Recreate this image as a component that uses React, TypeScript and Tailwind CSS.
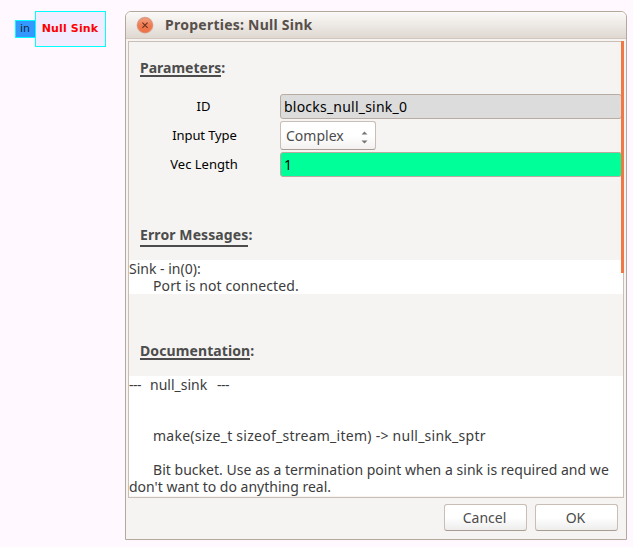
import type { ReactNode } from "react";

function Heading({ title, tracking, rule }: { title: string; tracking: string; rule: string }) {
  return (
    <h2 className={`flex h-[19px] pl-[11px] text-[14px] leading-[18px] font-bold text-[#4c4c4c] ${tracking}`}>
      <span className={`border-b-2 border-[#4c4c4c] ${rule}`}>{title}</span>:
    </h2>
  );
}

function Label({ children, tracking }: { children: ReactNode; tracking: string }) {
  return <div className={`w-[151px] text-center text-[13px] text-black ${tracking}`}>{children}</div>;
}

function Button({ children }: { children: ReactNode }) {
  return (
    <button className="h-[27px] w-[83px] rounded-[3px] border border-[#c9beb5] border-b-[#a99d93] bg-linear-to-b from-white from-50% to-[#eeedec] pr-[2px] text-[14px] leading-[25px] text-[#4c4c4c]">
      {children}
    </button>
  );
}

export default function App() {
  return (
    <div className="flex h-[547px] w-[633px] items-start overflow-hidden bg-[#fff8ff] pt-[11px] font-['Noto_Sans',sans-serif]">
      <div className="ml-[15px] flex w-[110px] shrink-0 items-start font-['DejaVu_Sans',sans-serif]">
        <div className="mt-[9px] h-[18px] w-[20px] border border-r-0 border-[#00ffff] bg-[#3399ff] pr-px text-center text-[11px] leading-[15px] text-[#14263a]">
          in
        </div>
        <div className="h-[36px] w-[71px] border border-[#00ffff] bg-[#f1ecff] pr-px text-center text-[11px] leading-[33px] font-bold tracking-[0.13px] whitespace-nowrap text-[#ff0000]">
          Null Sink
        </div>
      </div>

      <div className="flex h-[529px] w-[502px] shrink-0 flex-col rounded-t-[6px] border border-[#b4a89e] bg-[#f5f4f2]">
        <div className="flex h-[27px] shrink-0 items-center rounded-t-[5px] border-b border-[#d3c7bd] bg-linear-to-b from-[#fbfaf8] to-[#dfd8d1] pl-[10px]">
          <svg width="18" height="18" viewBox="0 0 18 18">
            <defs>
              <linearGradient id="close" x1="0" y1="0" x2="0" y2="1">
                <stop offset="0" stopColor="#f3a184" />
                <stop offset="0.5" stopColor="#f07b50" />
                <stop offset="1" stopColor="#ee7043" />
              </linearGradient>
            </defs>
            <circle cx="9" cy="9.2" r="8.5" fill="#d9c4b9" />
            <circle cx="9" cy="9.2" r="7.5" fill="url(#close)" stroke="#df8465" strokeWidth="0.8" />
            <path d="M6.4 6.6 11.6 11.8M11.6 6.6 6.4 11.8" stroke="#663322" strokeWidth="1.1" />
          </svg>
          <span className="ml-[11px] -mt-px text-[14px] font-bold tracking-[0.25px] text-[#57504a]">Properties: Null Sink</span>
        </div>

        <div className="relative mt-[2px] ml-[2px] h-[457px] w-[496px] shrink-0 border border-[#cbbfb5] pt-[17px]">
          <Heading title="Parameters" tracking="tracking-[0px]" rule="h-[18px]" />
          <div className="mt-[16px] flex flex-col text-[14px] text-black">
            <div className="flex h-[29px] items-start leading-[25px]">
              <Label tracking="tracking-[0px] pr-[2px]">ID</Label>
              <div className="h-[25px] w-[342px] rounded-[3px] border border-[#b8aca2] bg-[#dcdcdc] pl-[3px] leading-[23px] tracking-[0.22px]">
                blocks_null_sink_0
              </div>
            </div>
            <div className="flex h-[29px] items-start leading-[25px]">
              <Label tracking="tracking-[-0.1px]">Input Type</Label>
              <div className="-mt-[2px] flex h-[29px] w-[96px] items-center justify-between rounded-[3px] border border-[#c9beb5] border-b-[#a99d93] bg-linear-to-b from-white from-50% to-[#f3f1f0] pr-[7px] pl-[5px] text-[#4c4c4c]">
                Complex
                <svg className="mt-[3px]" width="7" height="13" viewBox="0 0 7 13" fill="#777573">
                  <path d="M0.5 3.5 3.5 0.5 6.5 3.5ZM0.5 9.5 3.5 12.5 6.5 9.5Z" />
                </svg>
              </div>
            </div>
            <div className="flex items-start leading-[25px]">
              <Label tracking="tracking-[0px] pr-px">Vec Length</Label>
              <div className="h-[25px] w-[342px] rounded-[3px] border border-[#b8aca2] bg-[#00ff99] pl-[3px] leading-[23px]">1</div>
            </div>
          </div>

          <div className="mt-[49px]">
            <Heading title="Error Messages" tracking="tracking-[0.1px]" rule="h-[21px]" />
          </div>
          <div className="mt-[15px] h-[34px] bg-white text-[14px] leading-[17px] whitespace-pre text-[#3c3c3c]">
            <p>Sink - in(0):</p>
            <p className="pl-[24px] tracking-[0.1px]">Port is not connected.</p>
          </div>

          <div className="mt-[48px]">
            <Heading title="Documentation" tracking="tracking-[0.1px]" rule="h-[18px]" />
          </div>
          <div className="mt-[15px] h-[120px] bg-white text-[14px] leading-[17px] whitespace-pre text-[#3c3c3c]">
            <p className="flex">
              <span className="w-[21px] tracking-[-0.5px]">---</span>
              <span className="w-[67px]">null_sink</span>
              <span className="tracking-[-0.5px]">---</span>
            </p>
            <p className="mt-[34px] pl-[24px] tracking-[0.26px]">make(size_t sizeof_stream_item) -&gt; null_sink_sptr</p>
            <p className="mt-[17px] pl-[24px] tracking-[0.03px]">Bit bucket. Use as a termination point when a sink is required and we</p>
            <p>don't want to do anything real.</p>
          </div>
          <div className="absolute -top-px -right-px h-[232px] w-[3px] bg-[#f07746]" />
        </div>

        <div className="mt-[6px] flex justify-end gap-[8px] pr-[8px]">
          <Button>Cancel</Button>
          <Button>OK</Button>
        </div>
      </div>
    </div>
  );
}
